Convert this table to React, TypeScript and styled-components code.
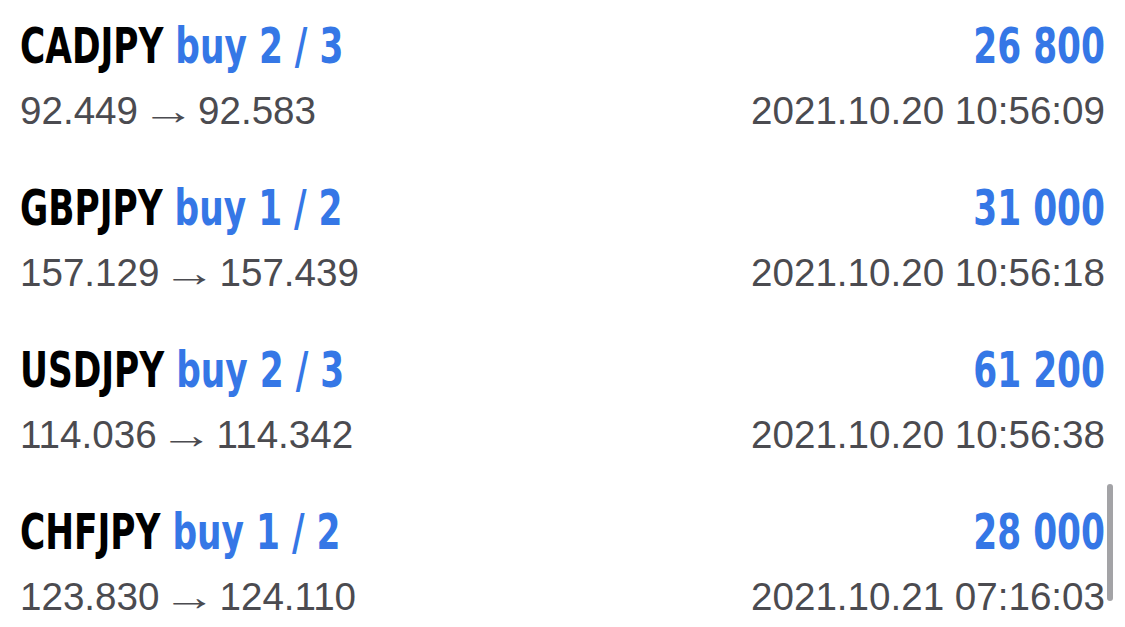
import React from 'react';
import styled, { createGlobalStyle } from 'styled-components';

const GlobalStyle = createGlobalStyle`
  html, body {
    margin: 0;
    padding: 0;
    background: #ffffff;
  }
  body {
    font-family: "Liberation Sans", Arial, sans-serif;
    overflow: hidden;
  }
`;

const Page = styled.div`
  position: relative;
  width: 1125px;
  height: 627px;
  overflow: hidden;
  background: #fff;
`;

const List = styled.div`
  display: flex;
  flex-direction: column;
`;

const Row = styled.div`
  display: grid;
  grid-template-columns: 1fr auto;
  grid-template-rows: 58px 72px;
  height: 162px;
  padding: 17px 20px 0 20px;
  box-sizing: border-box;
`;

// condensed headline face: DejaVu Condensed squeezed a bit more
const Title = styled.div`
  font-family: "DejaVu Sans Condensed", "DejaVu Sans", sans-serif;
  font-weight: 700;
  font-size: 50px;
  line-height: 58px;
  color: #000;
  white-space: nowrap;
  transform: scaleX(0.765);
  transform-origin: left center;
`;

const Accent = styled.span`
  color: #3577e6;
`;

const Amount = styled(Title)`
  color: #3577e6;
  text-align: right;
  transform-origin: right center;
`;

const Sub = styled.div<{ $right?: boolean }>`
  font-family: "Liberation Sans", Arial, sans-serif;
  font-size: 38.6px;
  line-height: 72px;
  color: #4b4b50;
  white-space: nowrap;
  text-align: ${p => (p.$right ? 'right' : 'left')};
`;

const Arrow = styled.span`
  display: inline-block;
  transform: scaleX(1.4);
`;

const Scrollbar = styled.div`
  position: absolute;
  right: 12px;
  top: 484px;
  width: 6px;
  height: 117px;
  border-radius: 3px;
  background: #a3a3a6;
`;

type Trade = {
  symbol: string;
  side: string;
  lots: string;
  open: string;
  close: string;
  profit: string;
  time: string;
};

const trades: Trade[] = [
  { symbol: 'CADJPY', side: 'buy', lots: '2 / 3', open: '92.449', close: '92.583', profit: '26 800', time: '2021.10.20 10:56:09' },
  { symbol: 'GBPJPY', side: 'buy', lots: '1 / 2', open: '157.129', close: '157.439', profit: '31 000', time: '2021.10.20 10:56:18' },
  { symbol: 'USDJPY', side: 'buy', lots: '2 / 3', open: '114.036', close: '114.342', profit: '61 200', time: '2021.10.20 10:56:38' },
  { symbol: 'CHFJPY', side: 'buy', lots: '1 / 2', open: '123.830', close: '124.110', profit: '28 000', time: '2021.10.21 07:16:03' },
];

export default function App() {
  return (
    <Page>
      <GlobalStyle />
      <List>
        {trades.map(t => (
          <Row key={t.symbol}>
            <Title>
              {t.symbol} <Accent>{t.side} {t.lots}</Accent>
            </Title>
            <Amount>{t.profit}</Amount>
            <Sub>{t.open} <Arrow>→</Arrow> {t.close}</Sub>
            <Sub $right>{t.time}</Sub>
          </Row>
        ))}
      </List>
      <Scrollbar />
    </Page>
  );
}
